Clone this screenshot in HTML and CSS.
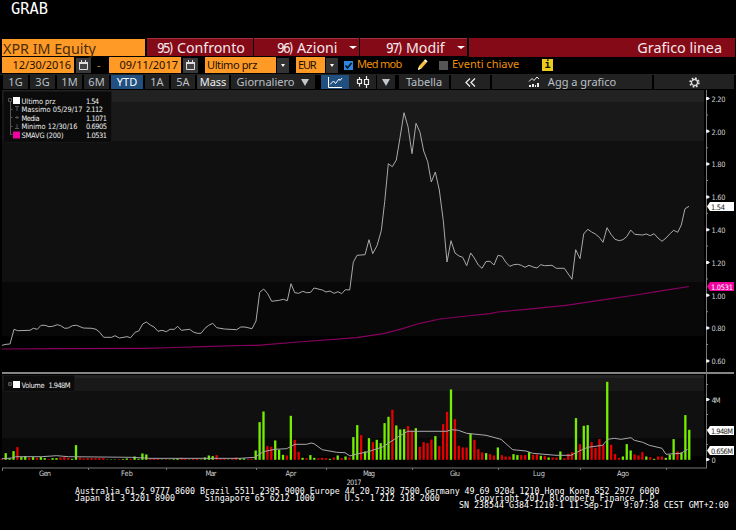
FILE: index.html
```
<!DOCTYPE html>
<html lang="it">
<head>
    <meta charset="UTF-8">
    <title>XPR IM Equity - Grafico linea</title>
    <link rel="stylesheet" href="styles.css">
</head>
<body>
  <h1 class="grab">GRAB</h1>

  <header class="titlebar">
    <div class="ticker"><span>XPR IM Equity</span></div>
    <div class="menu menu-confronto"><b>95)</b><span>Confronto</span></div>
    <div class="menu menu-azioni"><b>96)</b><span>Azioni</span><i class="caret"></i></div>
    <div class="menu menu-modif"><b>97)</b><span>Modif</span><i class="caret"></i></div>
    <div class="page-name"><span>Grafico linea</span></div>
  </header>

  <div class="fields">
    <div class="field date"><span>12/30/2016</span></div>
    <div class="calendar"><svg width="9" height="10"><path d="M.5 2.5h8v7h-8z" fill="#444" stroke="#ddd"/><path d="M0 2h9v2H0zM2 0h1v2H2zM6 0h1v2H6z" fill="#ddd"/></svg></div>
    <span class="dash">-</span>
    <div class="field date"><span>09/11/2017</span></div>
    <div class="calendar"><svg width="9" height="10"><path d="M.5 2.5h8v7h-8z" fill="#444" stroke="#ddd"/><path d="M0 2h9v2H0zM2 0h1v2H2zM6 0h1v2H6z" fill="#ddd"/></svg></div>
    <div class="field price"><span>Ultimo prz</span></div>
    <div class="drop"><i class="caret small"></i></div>
    <div class="field currency"><span>EUR</span></div>
    <div class="drop"><i class="caret small"></i></div>
    <div class="check on"><svg width="9" height="9"><path d="M1.5 4.5l2 2.5 4-5" fill="none" stroke="#06121f" stroke-width="1.6"/></svg></div>
    <span class="label med">Med mob</span>
    <svg class="pencil" width="11" height="12"><path d="M1 11l1-4 6-6.5 2.5 2L4.500 9.500z" fill="#f3c23c"/><path d="M7 1.500l1.200-1.300 2.300 2-1.200 1.300z" fill="#f7efe0"/><path d="M1 11l.8-3 2 1.800z" fill="#fff"/></svg>
    <div class="check"></div>
    <span class="label eventi">Eventi chiave</span>
    <div class="info">i</div>
  </div>

  <nav class="toolbar">
    <div class="btn w25">1G</div>
    <div class="btn w25">3G</div>
    <div class="btn w25">1M</div>
    <div class="btn w25">6M</div>
    <div class="btn ytd">YTD</div>
    <div class="btn w24">1A</div>
    <div class="btn w24">5A</div>
    <div class="btn mass">Mass</div>
    <div class="btn daily"><span>Giornaliero</span><i class="triangle"></i></div>
    <div class="btn line-icon"><svg width="16" height="13"><path d="M1.500 1v10.500H15M3 8.500L6.500 5l2 2.500L12 3l1 1.500 2-2.500" fill="none" stroke="#fff"/></svg></div>
    <div class="btn candle-icon"><svg width="14" height="12"><path d="M3.500 1v2M3.500 8v2.500M1.500 3.500h4v4h-4zM10.500 0v3M10.500 9v3M8.500 3.500h4v5h-4z" fill="none" stroke="#eee" stroke-width="1.200"/></svg></div>
    <div class="btn more"><i class="triangle"></i></div>
    <div class="btn table">Tabella</div>
    <div class="btn back"><svg width="11" height="9"><path d="M5 .5l-4 4 4 4M10 .5l-4 4 4 4" fill="none" stroke="#eee" stroke-width="1.300"/></svg></div>
    <div class="btn add"><svg width="12" height="12"><path d="M1 5.500l3-3 2 2 3-3.500 2 2" fill="none" stroke="#eee"/><path d="M1 9h2v2H1zM4 8h2v3H4zM7 9h1v2H7zM9 7h2v4H9z" fill="#eee"/></svg><span>Agg a grafico</span></div>
    <div class="btn gear"><svg width="11" height="11"><circle cx="5.500" cy="5.500" r="4.200" fill="none" stroke="#ddd" stroke-width="2" stroke-dasharray="1.700 1.600"/><circle cx="5.500" cy="5.500" r="3" fill="none" stroke="#ddd" stroke-width="1.300"/></svg></div>
  </nav>

  <!-- price and volume panels share one coordinate system -->
  <svg class="chart" width="736" height="398" viewBox="0 90 736 398">
    <g class="bands">
      <path class="b1" d="M2 90h702v12H2zM2 375h702v3H2z"/>
      <path class="b2" d="M2 102h702v39H2zM2 378h702v13H2z"/>
      <path class="b3" d="M2 141h702v141H2zM2 391h702v47H2z"/>
      <path class="b4" d="M2 282h702v54H2zM2 438h702v18H2z"/>
    </g>

    <polyline class="smavg" points="2,349 60,348.7 145,348.3 175,347.5 203,346.7 240,345.5 256.7,345.3 298.3,342 356.7,337.7 383.3,333.7 400,329.3 420,323.3 440,319 466.7,316 490,313.7 497.7,312 526,309.3 566,305.3 606,299.3 636,295 662.7,290.7 689,286.5"/>
    <polyline class="price-line" points="2,345.3 6,344.3 10,344 14,329.3 17.7,330.7 30,330.3 33.3,328.3 37.3,329.3 41,325.3 45,325.3 49,326.7 52.7,326.3 57.3,324.7 60.7,325.7 64.7,328.3 68.3,328 72.3,325.7 76.7,325.3 83.3,328 91.7,328.3 96,329.3 99.7,332.3 103.7,337.3 111.7,337.3 115,335.7 119.3,338 127,336.7 130.7,337.7 135,332.3 138.7,331 142.7,324 146.3,322 150.3,325 154,327 158,331.3 162,330.3 166.3,331.7 170,329.3 174.3,329.3 177.7,326.3 181.3,330.3 189.7,329.3 193.3,332 197.3,333.3 201,333.3 205,328.3 208.7,325.3 212.7,323.3 216.7,327.7 224.3,329 236.7,329.7 240.7,327 245,327 252,328.7 256,321 259.7,292.3 263.7,289 267.7,293.7 271.7,301.3 279.3,300.3 283.3,299.3 287.3,300.7 291,283.7 294.7,292.7 298.7,293.3 302.7,291.3 306.7,292.7 310.7,292.3 314,288 322.3,290 326,292 330,291 334,293.3 338,291.7 341.7,293.7 345.3,289.7 349.7,290 353.3,262.3 357,255.3 365,254.7 369,239.7 372.7,253.7 377,245.7 381.3,230.7 384.7,201.7 388.3,163.7 392.3,166.7 396.3,160 400,137.7 404,112.7 408,126.7 412,153.7 416,123.3 420,132.3 423.7,151 427.7,161.7 431.3,182 435.3,172 439.3,190 443.3,220.7 447,262 451,240.7 455,253 459,256 462.7,257.3 466.7,265.7 470.7,253 474.3,258 478.3,265 482,268.3 486,261.5 490,261.3 494,265 498,255.3 502,256.3 505.7,262 509.7,266.3 513.7,264.7 517.7,264.3 521.3,265.3 525,267.3 529,265.3 533,267 537,268 540.7,264.7 544.7,265.7 552,265.3 556.3,268.3 564.3,268.3 572,279.3 575.7,249.7 580,258.7 583.7,234 587.7,229.3 591.7,232 595.3,234 599.3,237.3 603,242.3 607,227.7 611,234.3 615,239.3 619.3,240.7 623,239.7 627,236.3 630.7,230 634.7,234.3 642.3,235 646.3,234 650.3,235.7 654,233.7 658,238 662,241.3 666,238 669.7,234 673.7,230.3 677.7,232.3 681.3,225 685,208.7 689,206.3"/>

    <g id="volumes"></g>
    <polyline class="volume-avg" points="2,458.7 11.7,458 15.7,456.7 41.7,456.7 56.7,455.7 68.3,456.7 131.7,457.3 150,458.3 240,458.3 255,457.3 263.3,451.7 275,449.3 286.7,448.7 295,444.3 306.7,444.3 311,443 314,443.7 322.3,449.7 336.7,452.3 345,452.7 350,456 356.7,454 368.3,451.7 383.3,446.7 396.7,437.7 407.7,431.3 446.7,431.3 451.7,429.7 458.3,430.3 466.7,433.3 486,435.3 501,439.3 512.7,449.7 526,451 532.7,453.3 556,455.3 571,455.3 579.3,451 587.7,447.3 602.7,445.3 607.7,439.3 614.3,438.3 621,439.3 631,437.7 634.3,440.3 642.7,442.3 649.3,445.3 662,448.3 666,454.3 681,453.3 687.7,449.3"/>

    <path class="separator" d="M2 372h732v2H2z"/>
    <path class="axis" d="M2 468h705M706.500 90v378"/>
    <path class="axis" d="M2.500 468v3M88.500 468v2M166.500 468v2M256.500 468v2M326.500 468v2M412.500 468v2M498.500 468v2M580.500 468v2M666.500 468v2"/>
    <g id="ticks"></g>

    <g class="axis-text">
      <text x="711.500" y="101.500" textLength="14">2.20</text>
      <text x="711.500" y="134.500" textLength="14">2.00</text>
      <text x="711.500" y="167" textLength="14">1.80</text>
      <text x="711.500" y="200" textLength="14">1.60</text>
      <text x="711.500" y="233" textLength="14">1.40</text>
      <text x="711.500" y="265.500" textLength="14">1.20</text>
      <text x="711.500" y="298.500" textLength="14">1.00</text>
      <text x="711.500" y="331" textLength="14">0.80</text>
      <text x="711.500" y="364" textLength="14">0.60</text>
      <text x="711.500" y="402.500" textLength="9">4M</text>
      <text x="711.500" y="463" textLength="4">0</text>
      <text x="39" y="476" textLength="12">Gen</text>
      <text x="121" y="476" textLength="12">Feb</text>
      <text x="205.500" y="476" textLength="11">Mar</text>
      <text x="285.500" y="476" textLength="11">Apr</text>
      <text x="363" y="476" textLength="12">Mag</text>
      <text x="450" y="476" textLength="10">Giu</text>
      <text x="533" y="476" textLength="12">Lug</text>
      <text x="617" y="476" textLength="12">Ago</text>
      <text x="346.500" y="484.500" textLength="15">2017</text>
    </g>

    <g class="tags">
      <path class="tag" d="M707 206.500l3-4.500h24v9h-24z"/>
      <text x="711" y="209.500" textLength="14">1.54</text>
      <path class="tag pink" d="M707 286.500l3-4.500h24v9h-24z"/>
      <text class="on-pink" x="711" y="289.800" textLength="22">1.0531</text>
      <path class="tag" d="M707 430.500l3-4.500h24v9h-24z"/>
      <text x="711" y="433.500" textLength="22">1.948M</text>
      <path class="tag" d="M707 450.500l3-4.500h24v9h-24z"/>
      <text x="711" y="453.500" textLength="22">0.656M</text>
    </g>

    <rect class="legend-box" x="3.500" y="91.500" width="108" height="51" rx="1"/>
    <path class="tree" d="M8.500 98.500h3v3h-3zM10.500 102v33M10.500 109.500h2M10.500 117.500h2M10.500 126.500h2M10.500 134.500h2M15 106.500h4M17 107v4M15 117.500h4M17 116v3M15 128.500h4M17 124v4"/>
    <rect class="swatch" x="13" y="97" width="7" height="7"/>
    <rect class="swatch pink" x="13" y="131.500" width="7" height="7"/>
    <g class="legend-text">
      <text x="21.500" y="103.500" textLength="34">Ultimo prz</text>
      <text x="86" y="103.500" textLength="13">1.54</text>
      <text x="21.500" y="112" textLength="61">Massimo 05/29/17</text>
      <text x="86" y="112" textLength="17">2.112</text>
      <text x="21.500" y="120.500" textLength="18">Media</text>
      <text x="86" y="120.500" textLength="21">1.1071</text>
      <text x="21.500" y="129.300" textLength="56">Minimo 12/30/16</text>
      <text x="86" y="129.300" textLength="21">0.6905</text>
      <text x="21.500" y="138" textLength="42">SMAVG (200)</text>
      <text x="86" y="138" textLength="21">1.0531</text>
    </g>

    <rect class="legend-box" x="3.500" y="375.500" width="71" height="16" rx="1"/>
    <path class="tree" d="M8.500 382.500h3v3h-3zM9 384h2"/>
    <rect class="swatch" x="13" y="381" width="7" height="7"/>
    <g class="legend-text">
      <text x="21.500" y="387.500" textLength="23">Volume</text>
      <text x="48.500" y="387.500" textLength="22">1.948M</text>
    </g>
  </svg>

  <footer class="contacts">
    <pre>Australia 61 2 9777 8600 Brazil 5511 2395 9000 Europe 44 20 7330 7500 Germany 49 69 9204 1210 Hong Kong 852 2977 6000
Japan 81 3 3201 8900      Singapore 65 6212 1000      U.S. 1 212 318 2000       Copyright 2017 Bloomberg Finance L.P.</pre>
    <pre class="serial">SN 238544 G384-1210-1 11-Sep-17  9:07:38 CEST GMT+2:00</pre>
  </footer>

  <script src="chart.js"></script>
</body>
</html>
```

FILE: styles.css
```
* { box-sizing: border-box; }
body { margin: 0; width: 736px; height: 530px; background: #000; font-family: "Noto Sans", sans-serif; color: #ddd; overflow: hidden; }
.grab { margin: 0; height: 38px; padding-left: 11px; font: 15.4px/19px "DejaVu Sans Mono", monospace; color: #fff; }

.titlebar { display: flex; height: 18px; gap: 1px; padding-left: 2px; line-height: 18px; font-size: 14.2px; color: #f5e6e8; white-space: nowrap; }
.ticker { width: 144px; height: 18px; padding: 1px 0 0 1px; background: #ff9a27; border-top: 1px solid #000; border-right: 1px solid #000; color: #4a2c08; font-size: 14.3px; }
.menu { display: flex; align-items: center; height: 18px; background: #850a18; border-top: 1px solid #a03040; line-height: 16px; }
.menu b { width: 20px; font: 13.5px/16px "DejaVu Sans Condensed", "DejaVu Sans", sans-serif; font-stretch: condensed; letter-spacing: -1.8px; }
.menu-confronto { width: 106px; padding-left: 10px; }
.menu-azioni { width: 105px; padding-left: 23px; }
.menu-modif { width: 107px; padding-left: 26px; }
.page-name { width: 266px; height: 19px; margin-left: 1px; padding: 1px 13px 0 0; background: #850a18; text-align: right; font-size: 14.4px; }
.caret { width: 0; height: 0; border: 4px solid transparent; border-top: 3px solid #fff; border-bottom: 0; margin-left: auto; margin-right: 2px; }
.caret.small { border-width: 3px 2px 0; margin: 0; }

.fields { display: flex; align-items: center; height: 18px; padding: 1px 0 1px 2px; font-size: 11px; line-height: 16px; white-space: nowrap; }
.field { height: 16px; background: #ff9a27; color: #1c1000; }
.date { width: 72px; padding-right: 3px; text-align: right; }
.calendar { display: flex; align-items: center; justify-content: center; width: 15px; height: 15px; margin-left: 2px; background: #3a3a3a; }
.dash { width: 18px; padding-left: 6px; color: #e08a20; }
.price { width: 71px; margin-left: 7px; padding-left: 2px; letter-spacing: -0.4px; }
.drop { display: flex; align-items: center; justify-content: center; width: 12px; height: 15px; margin-left: 1px; background: #333; }
.currency { width: 29px; margin-left: 7px; padding-left: 2px; letter-spacing: -1.2px; }
.check { display: flex; width: 9px; height: 9px; background: #555; }
.check.on { margin-left: 6px; background: #2f86e0; }
.label { color: #ee9008; line-height: 14px; margin-bottom: 2px; }
.med { width: 60px; margin-left: 4px; letter-spacing: -0.7px; }
.pencil { margin-right: 11px; }
.eventi { width: 90px; margin-left: 4px; }
.info { width: 11px; height: 12px; background: #eccb1c; color: #111; font: bold 10px/12px "DejaVu Sans Mono", monospace; text-align: center; }

.toolbar { display: flex; height: 16px; padding: 0 0 1px 3px; gap: 2px; border-top: 1px solid #222; font-size: 11px; line-height: 14px; color: #b9c0c8; white-space: nowrap; }
.btn { display: flex; align-items: center; justify-content: center; height: 14px; background: #222; }
.w25 { width: 25px; }
.w24 { width: 24px; }
.ytd { width: 32px; background: #204f80; color: #fff; }
.mass { width: 32px; background: #333; color: #eee; }
.daily { width: 84px; gap: 7px; }
.triangle { width: 0; height: 0; border: 4px solid transparent; border-top: 7px solid #c3c8cd; border-bottom: 0; }
.line-icon { width: 28px; margin-left: 4px; background: #204f80; }
.candle-icon { width: 27px; margin-left: -2px; }
.more { width: 18px; margin-left: -1px; }
.table { width: 50px; margin-left: 2px; }
.back { width: 39px; }
.add { width: 160px; gap: 8px; }
.gear { width: 80px; }

.chart { display: block; }
.b1 { fill: #222; }
.b2 { fill: #191919; }
.b3 { fill: #101010; }
.b4 { fill: #080808; }
.price-line, .smavg, .volume-avg { fill: none; stroke: #a9a9ae; stroke-width: 1; }
.smavg { stroke: #87005f; stroke-width: 1.2; }
.up { fill: #76ee00; }
.down { fill: #e60000; }
.separator { fill: #858588; }
.axis { fill: none; stroke: #777; }
.tick { fill: #eee; }
.minor { fill: #888; }
.chart text { font-family: "DejaVu Sans Condensed", "DejaVu Sans", sans-serif; font-stretch: condensed; font-size: 7.4px; }
.axis-text { fill: #d0d0d0; }
.tags { fill: #222; }
.tag { fill: #fff; }
.pink, .tag.pink { fill: #f0009c; }
.on-pink { fill: #fff; }
.legend-box { fill: #0b0b0b; stroke: #161616; }
.legend-text { fill: #f0f0f0; }
.tree { fill: none; stroke: #555; }
.swatch { fill: #fff; }
.swatch.pink { fill: #f0009c; }

.contacts { color: #fff; }
.contacts pre { margin: 0 0 0 75px; font: 8.3px/7px "DejaVu Sans Mono", monospace; }
.contacts .serial { margin-left: 459px; }
```

FILE: chart.js
```
const svgNS = "http://www.w3.org/2000/svg";

// one entry per session: u = up, d = down, then the bar height in thirds of a pixel
const sessions = `d3 u20 u4 u26 d38 u8 u11 d6 u8 d6 u8 u5 d2 u5 u5 d7 d8 d6 u3 u44
d7 d4 d5 d5 d5 d5 d5 u1 u1 u1 d2 u2 u4 d3 u10 u3 u19 u16 d4 d4
d4 u1 d2 u1 u2 u4 d6 d4 u1 d4 d4 u1 u7 u13 u11 d14 d4 d4 u1 d4
d7 u4 u4 d2 d3 u28 u113 u145 d41 d39 u58 u30 u15 d13 u132 d60 d24 u6 d5 u14
u6 d4 d6 d5 u3 d7 u13 d5 u10 d7 u68 u104 d74 u25 u65 d53 u60 u50 u110 u129
d150 u103 u91 u92 d101 d88 u95 d39 d53 d50 d61 u71 d41 d107 d144 u211 d122 d42 d37 d37
u78 d60 d32 d22 u20 d17 d13 u37 d14 d10 d10 u17 u14 d14 d14 u23 d15 d16 u12 d12
u7 d7 d7 u25 d5 d18 d23 u125 d47 u102 u104 d53 d36 d62 d45 u234 d45 d17 d6 u10
u47 u28 d16 d13 d23 u10 d8 u3 d10 d10 u6 u15 u62 d25 u22 u134 u90`.split(/\s+/);

const volumes = document.getElementById("volumes");
sessions.forEach((s, i) => {
  const h = Number(s.slice(1)) / 3;
  const bar = document.createElementNS(svgNS, "rect");
  bar.setAttribute("class", s[0] === "u" ? "up" : "down");
  bar.setAttribute("x", (1.8 + i * 3.906 - 1.15).toFixed(2));
  bar.setAttribute("y", (459.8 - h).toFixed(2));
  bar.setAttribute("width", 2.3);
  bar.setAttribute("height", h.toFixed(2));
  volumes.appendChild(bar);
});

const ticks = document.getElementById("ticks");
function tick(y, major) {
  const p = document.createElementNS(svgNS, "path");
  p.setAttribute("class", major ? "tick" : "minor");
  p.setAttribute("d", major ? `M706 ${y - 1.5}h2l2 1.5-2 1.5h-2z` : `M706 ${y - 0.5}h2v1h-2z`);
  ticks.appendChild(p);
}
for (let i = 0; i < 9; i++) {
  tick(98.5 + i * 32.8, true);
  if (i < 8) tick(114.9 + i * 32.8, false);
}
tick(399.5, true);
tick(459.5, true);
[384.5, 414.5, 429.5, 444.5].forEach(y => tick(y, false));
```
